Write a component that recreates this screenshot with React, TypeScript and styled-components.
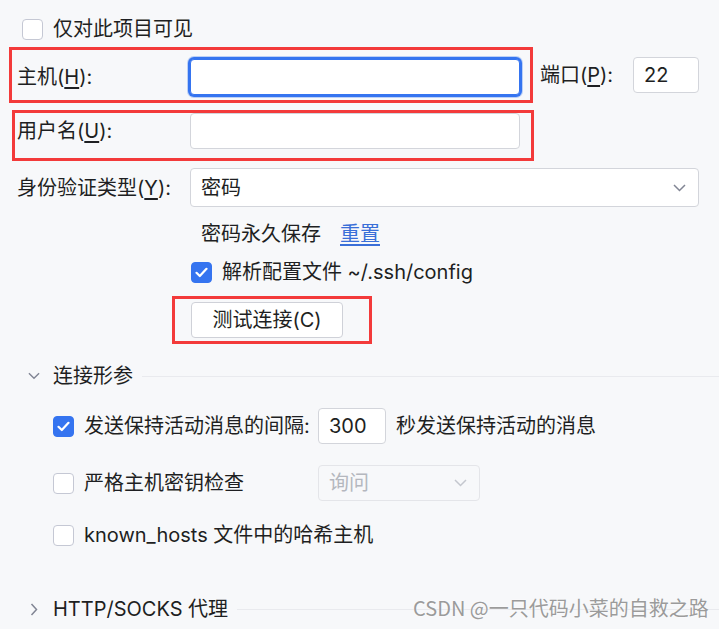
import styled, { createGlobalStyle } from 'styled-components'

const GlobalStyle = createGlobalStyle`
  html, body {
    margin: 0;
    padding: 0;
    background: #f7f8fa;
  }
`

const Page = styled.div`
  position: relative;
  width: 719px;
  height: 629px;
  overflow: hidden;
  box-sizing: border-box;
  padding: 11px 20px 0 17px;
  background: #f7f8fa;
  color: #1e1f22;
  font-family: Inter, "Noto Sans CJK SC", sans-serif;
  font-size: 20px;
  line-height: 24px;
`

const Key = styled.span`
  text-decoration: underline;
  text-underline-offset: 3px;
  text-decoration-thickness: 1.5px;
`

const CheckRow = styled.div<{ $indent?: number; $top?: number }>`
  display: flex;
  align-items: center;
  gap: 10px;
  height: 36px;
  padding-left: ${p => p.$indent ?? 0}px;
  margin-top: ${p => p.$top ?? 0}px;
  white-space: nowrap;
`

const Box = styled.span<{ $checked?: boolean }>`
  display: inline-flex;
  align-items: center;
  justify-content: center;
  flex: none;
  width: 21px;
  height: 21px;
  box-sizing: border-box;
  border-radius: 4px;
  background: ${p => (p.$checked ? '#3574f0' : '#ffffff')};
  border: 1px solid ${p => (p.$checked ? '#3574f0' : '#c5c8d4')};
`

const Mark = styled.div<{ $pad: string; $shift: number }>`
  display: flex;
  align-items: center;
  border: 3px solid #f33a3a;
  padding: ${p => p.$pad};
  margin-left: ${p => p.$shift}px;
  width: fit-content;
`

const Label = styled.div`
  width: 173px;
  flex: none;
  white-space: nowrap;
`

const Field = styled.div<{ $w: number; $focused?: boolean }>`
  width: ${p => p.$w}px;
  height: 36px;
  box-sizing: border-box;
  flex: none;
  display: flex;
  align-items: center;
  padding-left: 10px;
  background: #ffffff;
  border-radius: 4px;
  border: 1px solid ${p => (p.$focused ? '#3574f0' : '#d3d5db')};
  box-shadow: ${p => (p.$focused ? '0 0 0 2px #3574f0, 0 0 0 3px rgba(53,116,240,0.3)' : 'none')};
`

const HostLine = styled.div`
  display: flex;
  align-items: center;
`

const PortLabel = styled.div`
  width: 93px;
  margin-left: 7px;
  white-space: nowrap;
`

const AuthRow = styled.div`
  display: flex;
  align-items: center;
  margin-top: 7px;
`

const Dropdown = styled.div<{ $w: number; $h: number; $disabled?: boolean }>`
  width: ${p => p.$w}px;
  height: ${p => p.$h}px;
  box-sizing: border-box;
  display: flex;
  align-items: center;
  justify-content: space-between;
  padding: 0 12px 0 10px;
  border-radius: 4px;
  background: ${p => (p.$disabled ? '#f7f8fa' : '#ffffff')};
  border: 1px solid ${p => (p.$disabled ? '#e4e5e9' : '#d3d5db')};
  color: ${p => (p.$disabled ? '#b4b7be' : 'inherit')};
`

const NoteRow = styled.div`
  display: flex;
  align-items: center;
  gap: 19px;
  height: 36px;
  margin-top: 9px;
  padding-left: 184px;
`

const Link = styled.span`
  color: #3a6fd8;
  text-decoration: underline;
  text-underline-offset: 3px;
`

const Button = styled.div`
  width: 152px;
  height: 36px;
  box-sizing: border-box;
  display: flex;
  align-items: center;
  justify-content: center;
  background: #ffffff;
  border: 1px solid #cfd1d8;
  border-radius: 4px;
`

const SectionHead = styled.div<{ $top: number }>`
  display: flex;
  align-items: center;
  height: 36px;
  margin-top: ${p => p.$top}px;
  margin-right: -20px;
  padding-left: 11px;
  white-space: nowrap;
`

const Arrow = styled.span`
  display: inline-flex;
  justify-content: center;
  width: 12px;
  margin-right: 13px;
`

const Rule = styled.div`
  flex: 1;
  height: 1px;
  margin-left: 9px;
  background: #e9eaee;
`

const OptionRow = styled.div<{ $top: number }>`
  display: grid;
  grid-template-columns: 255px auto auto;
  justify-content: start;
  align-items: center;
  column-gap: 10px;
  height: 36px;
  margin-top: ${p => p.$top}px;
  padding-left: 36px;
  white-space: nowrap;
`

const OptionLabel = styled.div`
  display: flex;
  align-items: center;
  gap: 10px;
`

const Watermark = styled.div`
  position: absolute;
  left: 413px;
  top: 596px;
  color: #9b9b9b;
  font-family: "Noto Sans CJK SC", sans-serif;
  font-size: 20px;
  line-height: 24px;
  white-space: nowrap;
  text-shadow: 0 0 2px #ffffff;
`

function Check({ on }: { on?: boolean }) {
  return (
    <Box $checked={on}>
      {on && (
        <svg width="13" height="11" viewBox="0 0 13 11">
          <path d="M1.5 5.8 L4.8 9 L11.5 1.8" fill="none" stroke="#fff" strokeWidth="2.2" strokeLinecap="round" strokeLinejoin="round" />
        </svg>
      )}
    </Box>
  )
}

function Chevron({ color = '#818594', dir = 'down' }: { color?: string; dir?: 'down' | 'right' }) {
  return dir === 'down' ? (
    <svg width="13" height="8" viewBox="0 0 13 8">
      <path d="M1 1 L6.5 6.5 L12 1" fill="none" stroke={color} strokeWidth="1.5" />
    </svg>
  ) : (
    <svg width="8" height="13" viewBox="0 0 8 13">
      <path d="M1.5 1 L6.5 6.5 L1.5 12" fill="none" stroke={color} strokeWidth="1.5" />
    </svg>
  )
}

export default function App() {
  return (
    <>
      <GlobalStyle />
      <Page>
        <CheckRow $indent={5}>
          <Check />
          <span>仅对此项目可见</span>
        </CheckRow>

        <HostLine>
          <Mark $pad="9px 10px 5px 5px" $shift={-8}>
            <Label>主机(<Key>H</Key>):</Label>
            <Field $w={330} $focused />
          </Mark>
          <PortLabel>端口(<Key>P</Key>):</PortLabel>
          <Field $w={66}>22</Field>
        </HostLine>

        <Mark $pad="0 11px 9px 2px" $shift={-5} style={{ marginTop: 7 }}>
          <Label>用户名(<Key>U</Key>):</Label>
          <Field $w={330} />
        </Mark>

        <AuthRow>
          <Label>身份验证类型(<Key>Y</Key>):</Label>
          <Dropdown $w={509} $h={39}>
            <span>密码</span>
            <Chevron />
          </Dropdown>
        </AuthRow>

        <NoteRow>
          <span>密码永久保存</span>
          <Link>重置</Link>
        </NoteRow>

        <CheckRow $indent={174} $top={2}>
          <Check on />
          <span>解析配置文件 ~/.ssh/config</span>
        </CheckRow>

        <Mark $pad="3px 26px 3px 16px" $shift={155} style={{ marginTop: 6 }}>
          <Button>测试连接(C)</Button>
        </Mark>

        <SectionHead $top={14}>
          <Arrow><Chevron /></Arrow>
          <span>连接形参</span>
          <Rule />
        </SectionHead>

        <OptionRow $top={14}>
          <OptionLabel>
            <Check on />
            <span>发送保持活动消息的间隔:</span>
          </OptionLabel>
          <Field $w={68}>300</Field>
          <span>秒发送保持活动的消息</span>
        </OptionRow>

        <OptionRow $top={21}>
          <OptionLabel>
            <Check />
            <span>严格主机密钥检查</span>
          </OptionLabel>
          <Dropdown $w={162} $h={36} $disabled>
            <span>询问</span>
            <Chevron color="#c4c7ce" />
          </Dropdown>
        </OptionRow>

        <OptionRow $top={16}>
          <OptionLabel>
            <Check />
            <span>known_hosts 文件中的哈希主机</span>
          </OptionLabel>
        </OptionRow>

        <SectionHead $top={38}>
          <Arrow><Chevron dir="right" /></Arrow>
          <span>HTTP/SOCKS 代理</span>
          <Rule />
        </SectionHead>

        <Watermark>CSDN @一只代码小菜的自救之路</Watermark>
      </Page>
    </>
  )
}
